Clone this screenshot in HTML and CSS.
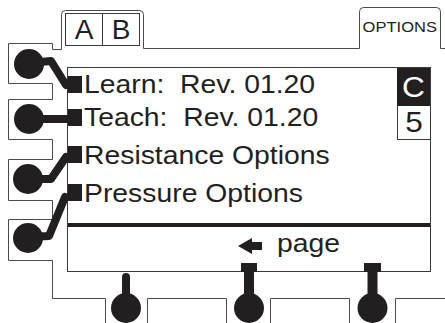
FILE: index.html
```html
<!DOCTYPE html>
<html>
<head>
<meta charset="utf-8">
<link rel="stylesheet" href="styles.css">
</head>
<body>
<div class="device">
  <div class="screen">
    <div class="main">
      <ul class="menu">
        <li class="row"><span class="mark"></span><span class="label">Learn:  Rev. 01.20</span></li>
        <li class="row"><span class="mark"></span><span class="label">Teach:  Rev. 01.20</span></li>
        <li class="row"><span class="mark"></span><span class="label">Resistance Options</span></li>
        <li class="row"><span class="mark"></span><span class="label">Pressure Options</span></li>
      </ul>
      <div class="side">
        <div class="cell cell-dark"><span class="glyph">C</span></div>
        <div class="cell cell-light"><span class="glyph">5</span></div>
      </div>
    </div>
    <div class="rule"></div>
    <div class="nav">
      <svg class="arrow" width="24" height="16" viewBox="0 0 24 16"><path d="M0 8L14 0V4H24V12H14V16Z"/></svg>
      <span class="label">page</span>
    </div>
  </div>

  <div class="tab-ab"><span class="tab-cell">A</span><span class="tab-cell">B</span></div>
  <div class="tab-options"><span class="tab-label">OPTIONS</span></div>

  <svg class="frame" width="445" height="323" viewBox="0 0 445 323">
    <g class="outline">
      <path d="M8.5 43.5H52.5V49.5H61.5V14.5Q61.5 10.5 65.5 10.5H139.5Q143.5 10.5 143.5 14.5V48.5H359.5V11.5Q359.5 7.5 363.5 7.5H436.5Q440.5 7.5 440.5 11.5V48.5H445"/>
      <path d="M8.5 43.5V83.5H52.5V99.5H8.5V139.5H52.5V159.5H8.5V200.5H52.5V219.5H8.5V260.5H52.5V298.5H105.5V323"/>
      <path d="M147.5 323V298.5H226.5V323M270.5 323V298.5H349.5V323M395.5 323V298.5H445"/>
    </g>
    <g class="knob">
      <circle cx="29" cy="64" r="15"/>
      <polyline class="arm" points="29,63 51,61 66,85"/>
      <circle cx="29" cy="119" r="15"/>
      <polyline class="arm" points="29,119 68,119"/>
      <circle cx="28" cy="179" r="15"/>
      <polyline class="arm" points="28,179 51,179 66,157"/>
      <circle cx="28" cy="238" r="15"/>
      <polyline class="arm" points="28,237 49,236 65,197"/>

      <circle cx="126" cy="308" r="15"/>
      <polyline class="stem" points="126,277 126,308"/>
      <rect x="241" y="263" width="16" height="9"/>
      <circle cx="249" cy="308" r="15"/>
      <polyline class="stem wide" points="249,272 249,308"/>
      <rect x="364" y="263" width="17" height="9"/>
      <circle cx="372.5" cy="308" r="15"/>
      <polyline class="stem wide" points="372.5,272 372.5,308"/>
    </g>
  </svg>
</div>
</body>
</html>
```
FILE: styles.css
```css
body {
  margin: 0;
  background: #ffffff;
  font-family: "Liberation Sans", Arial, sans-serif;
  color: #231f20;
}

.device {
  position: relative;
  width: 445px;
  height: 323px;
  overflow: hidden;
  box-sizing: border-box;
  padding: 67px 0 0 67px;
}

.screen {
  width: 364px;
  height: 205px;
  box-sizing: border-box;
  border: 1px solid #3a3a3a;
  background: #ffffff;
  display: flex;
  flex-direction: column;
}

.main {
  height: 155px;
  display: grid;
  grid-template-columns: 1fr 33px;
}

.menu {
  list-style: none;
  margin: 0;
  padding: 0;
  display: grid;
  grid-template-rows: 32px 34px 41px 35px;
}

.row {
  display: flex;
  align-items: center;
}

.mark {
  width: 14px;
  height: 17px;
  background: #231f20;
  margin-right: 2px;
  flex: none;
}

.label {
  display: inline-block;
  font-size: 26px;
  line-height: 26px;
  white-space: pre;
  transform: scaleX(1.09);
  transform-origin: left center;
}

.side {
  display: flex;
  flex-direction: column;
}

.cell {
  display: flex;
  align-items: center;
  justify-content: center;
  font-size: 29px;
  line-height: 29px;
}

.cell-dark {
  height: 38px;
  background: #231f20;
  color: #ffffff;
}

.cell-light {
  height: 34px;
  box-sizing: border-box;
  border-left: 1px solid #3a3a3a;
  border-bottom: 1px solid #3a3a3a;
}

.glyph {
  display: inline-block;
  transform: scaleX(1.09);
}

.rule {
  height: 4px;
  background: #231f20;
}

.nav {
  flex: 1;
  display: flex;
  align-items: flex-start;
  padding: 3px 0 0 170px;
  gap: 15px;
}

.arrow {
  margin-top: 8px;
  fill: #231f20;
  flex: none;
}

.tab-ab {
  position: absolute;
  left: 65px;
  top: 13px;
  width: 75px;
  height: 33px;
  box-sizing: border-box;
  border: 1px solid #3a3a3a;
  display: grid;
  grid-template-columns: 36px 36px;
  column-gap: 1px;
  background: #3a3a3a;
}

.tab-cell {
  background: #ffffff;
  display: flex;
  align-items: center;
  justify-content: center;
  font-size: 28px;
  line-height: 28px;
}

.tab-options {
  position: absolute;
  left: 359px;
  top: 19px;
  width: 82px;
  display: flex;
  justify-content: center;
}

.tab-label {
  display: inline-block;
  font-size: 15px;
  line-height: 15px;
  transform: scaleX(1.1);
}

.frame {
  position: absolute;
  left: 0;
  top: 0;
  pointer-events: none;
}

.outline path {
  fill: none;
  stroke: #4a4a4a;
  stroke-width: 1;
}

.knob {
  fill: #231f20;
}

.knob .arm {
  fill: none;
  stroke: #231f20;
  stroke-width: 8;
  stroke-linejoin: round;
  stroke-linecap: round;
}

.knob .stem {
  fill: none;
  stroke: #231f20;
  stroke-width: 8;
  stroke-linecap: round;
}

.knob .stem.wide {
  stroke-width: 10;
  stroke-linecap: butt;
}
```
